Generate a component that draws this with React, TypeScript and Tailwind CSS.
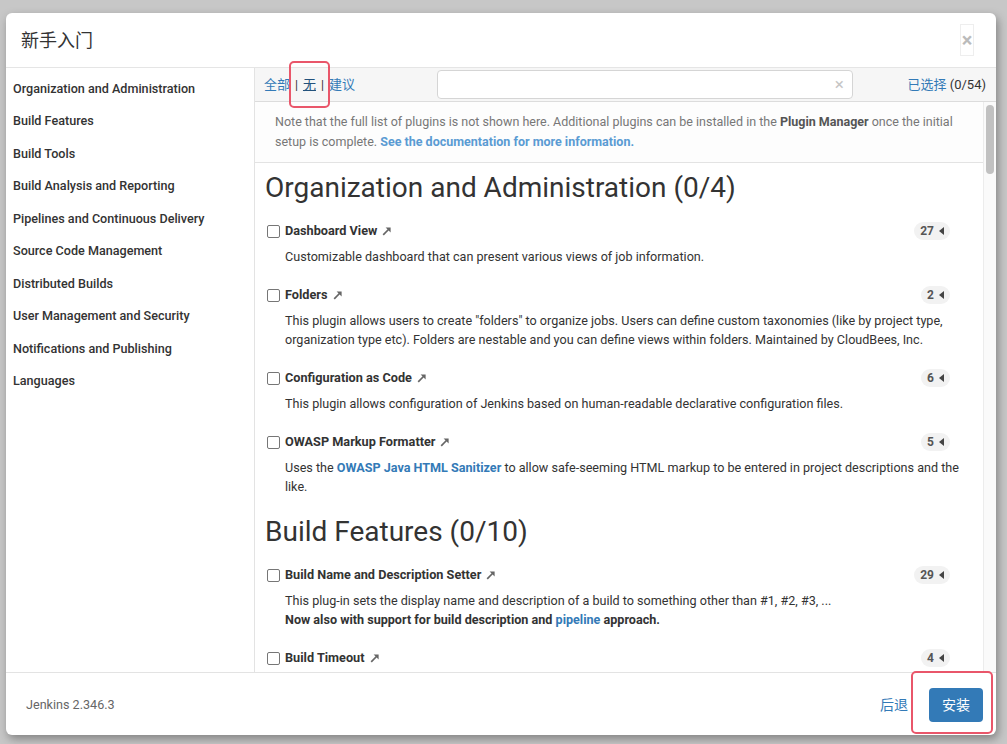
import React from "react";

const sidebar = [
  "Organization and Administration",
  "Build Features",
  "Build Tools",
  "Build Analysis and Reporting",
  "Pipelines and Continuous Delivery",
  "Source Code Management",
  "Distributed Builds",
  "User Management and Security",
  "Notifications and Publishing",
  "Languages",
];

function Arrow() {
  return (
    <svg width="10" height="10" viewBox="0 0 10 10" className="ml-[5px] shrink-0">
      <line x1="1.2" y1="8.8" x2="7" y2="3" stroke="#666" strokeWidth="1.7" />
      <polygon points="3.6,1.4 8.6,1.4 8.6,6.4" fill="#666" />
    </svg>
  );
}

function Badge({ n }: { n: string }) {
  return (
    <div className="ml-auto mr-[23px] h-[18px] px-[6px] rounded-full bg-[#f2f2f2] flex items-center gap-[5px] text-[12px] font-bold text-[#555]">
      <span>{n}</span>
      <svg width="5" height="8" viewBox="0 0 5 8">
        <polygon points="5,0 5,8 0,4" fill="#444" />
      </svg>
    </div>
  );
}

function Plugin({
  name,
  count,
  children,
}: {
  name: string;
  count: string;
  children?: React.ReactNode;
}) {
  return (
    <div className="mb-[19px]">
      <div className="h-5 flex items-center">
        <span className="ml-[2px] w-[13px] h-[13px] border border-[#767676] rounded-[2px] bg-white shrink-0" />
        <span className="ml-[5px] text-[12.7px] font-bold text-[#333]">{name}</span>
        <Arrow />
        <Badge n={count} />
      </div>
      {children ? (
        <div className="mt-[6px] ml-[20px] text-[12.6px] leading-[19px] text-[#333] whitespace-nowrap">
          {children}
        </div>
      ) : null}
    </div>
  );
}

export default function App() {
  return (
    <div className="relative w-[1007px] h-[744px] bg-[#c7c7c7] pt-[13px] pl-[6px] font-[Roboto,'Noto_Sans_CJK_SC',sans-serif] overflow-hidden">
      <div className="w-[990px] h-[722px] bg-white rounded-[6px] shadow-[2px_4px_10px_rgba(0,0,0,0.35)] flex flex-col overflow-hidden">
        {/* header */}
        <div className="h-[55px] shrink-0 border-b border-[#e5e5e5] flex items-center pl-[15px] pr-[22px]">
          <div className="text-[18px] text-[#333]">新手入门</div>
          <div className="ml-auto w-[14px] h-[32px] border border-[#eeeeee] flex items-center justify-center text-[20px] font-bold text-[#bbb] leading-none">
            ×
          </div>
        </div>
        {/* body */}
        <div className="h-[604px] shrink-0 flex">
          <div className="w-[249px] shrink-0 border-r border-[#e3e3e3] bg-white pt-[5px] pl-[7px]">
            {sidebar.map((s) => (
              <div key={s} className="h-[32.5px] flex items-center text-[12.6px] font-medium text-[#333]">
                {s}
              </div>
            ))}
          </div>
          <div className="flex-1 flex flex-col min-w-0">
            {/* toolbar */}
            <div className="h-[34px] shrink-0 bg-[#f6f6f6] border-b border-[#dcdcdc] flex items-center pl-[9px] pr-[10px] text-[13px]">
              <span className="text-[#337ab7]">全部</span>
              <span className="mx-[5px] text-[#333] text-[12px]">|</span>
              <span className="text-[#23527c] underline">无</span>
              <span className="mx-[5px] text-[#333] text-[12px]">|</span>
              <span className="text-[#337ab7]">建议</span>
              <div className="ml-[82px] w-[416px] h-[29px] bg-white border border-[#d5d5d5] rounded-[4px] flex items-center justify-end pr-[8px]">
                <span className="text-[#c5c5c5] text-[17px] leading-none">×</span>
              </div>
              <div className="ml-auto text-[13px]">
                <span className="text-[#337ab7]">已选择</span>
                <span className="text-[#333]"> (0/54)</span>
              </div>
            </div>
            {/* scroll area */}
            <div className="flex-1 flex min-h-0">
              <div className="flex-1 overflow-hidden min-w-0">
                <div className="py-[10px] pl-[20px] pr-[20px] border-b border-[#e3e3e3] text-[12.5px] leading-5 text-[#777] bg-[#fdfdfd] whitespace-nowrap">
                  Note that the full list of plugins is not shown here. Additional plugins can be installed in the{" "}
                  <b className="text-[#555]">Plugin Manager</b> once the initial
                  <br />
                  setup is complete.{" "}
                  <b className="text-[#5a9bd3]">See the documentation for more information.</b>
                </div>
                <div className="px-[10px]">
                  <h2 className="mt-[10px] mb-[18px] text-[28px] leading-[30px] text-[#333]">
                    Organization and Administration (0/4)
                  </h2>
                  <Plugin name="Dashboard View" count="27">
                    Customizable dashboard that can present various views of job information.
                  </Plugin>
                  <Plugin name="Folders" count="2">
                    This plugin allows users to create "folders" to organize jobs. Users can define custom taxonomies (like by project type,
                    <br />
                    organization type etc). Folders are nestable and you can define views within folders. Maintained by CloudBees, Inc.
                  </Plugin>
                  <Plugin name="Configuration as Code" count="6">
                    This plugin allows configuration of Jenkins based on human-readable declarative configuration files.
                  </Plugin>
                  <Plugin name="OWASP Markup Formatter" count="5">
                    Uses the <b className="text-[#337ab7]">OWASP Java HTML Sanitizer</b> to allow safe-seeming HTML markup to be entered in project descriptions and the
                    <br />
                    like.
                  </Plugin>
                  <h2 className="mt-[21px] mb-[18px] text-[28px] leading-[30px] text-[#333]">
                    Build Features (0/10)
                  </h2>
                  <Plugin name="Build Name and Description Setter" count="29">
                    This plug-in sets the display name and description of a build to something other than #1, #2, #3, ...
                    <br />
                    <b>
                      Now also with support for build description and{" "}
                      <span className="text-[#337ab7]">pipeline</span> approach.
                    </b>
                  </Plugin>
                  <Plugin name="Build Timeout" count="4" />
                </div>
              </div>
              <div className="w-[13px] shrink-0 border-l border-[#ececec] bg-[#fafafa] pt-[3px] flex justify-center">
                <div className="w-[8px] h-[69px] rounded-full bg-[#c1c1c1]" />
              </div>
            </div>
          </div>
        </div>
        {/* footer */}
        <div className="h-[63px] shrink-0 border-t border-[#e3e3e3] flex items-center pt-[2px] pl-[20px] pr-[13px]">
          <span className="text-[12.6px] text-[#666]">Jenkins 2.346.3</span>
          <span className="ml-auto text-[14px] text-[#337ab7]">后退</span>
          <div className="ml-[21px] w-[54px] h-[34px] rounded-[4px] bg-[#337ab7] text-white text-[14px] flex items-center justify-center">
            安装
          </div>
        </div>
      </div>
      {/* highlight boxes */}
      <div className="absolute left-[289px] top-[61px] w-[41px] h-[47px] border-2 border-[#e9566a] rounded-[5px]" />
      <div className="absolute left-[911px] top-[671px] w-[82px] h-[63px] border-2 border-[#e9566a] rounded-[5px]" />
    </div>
  );
}
